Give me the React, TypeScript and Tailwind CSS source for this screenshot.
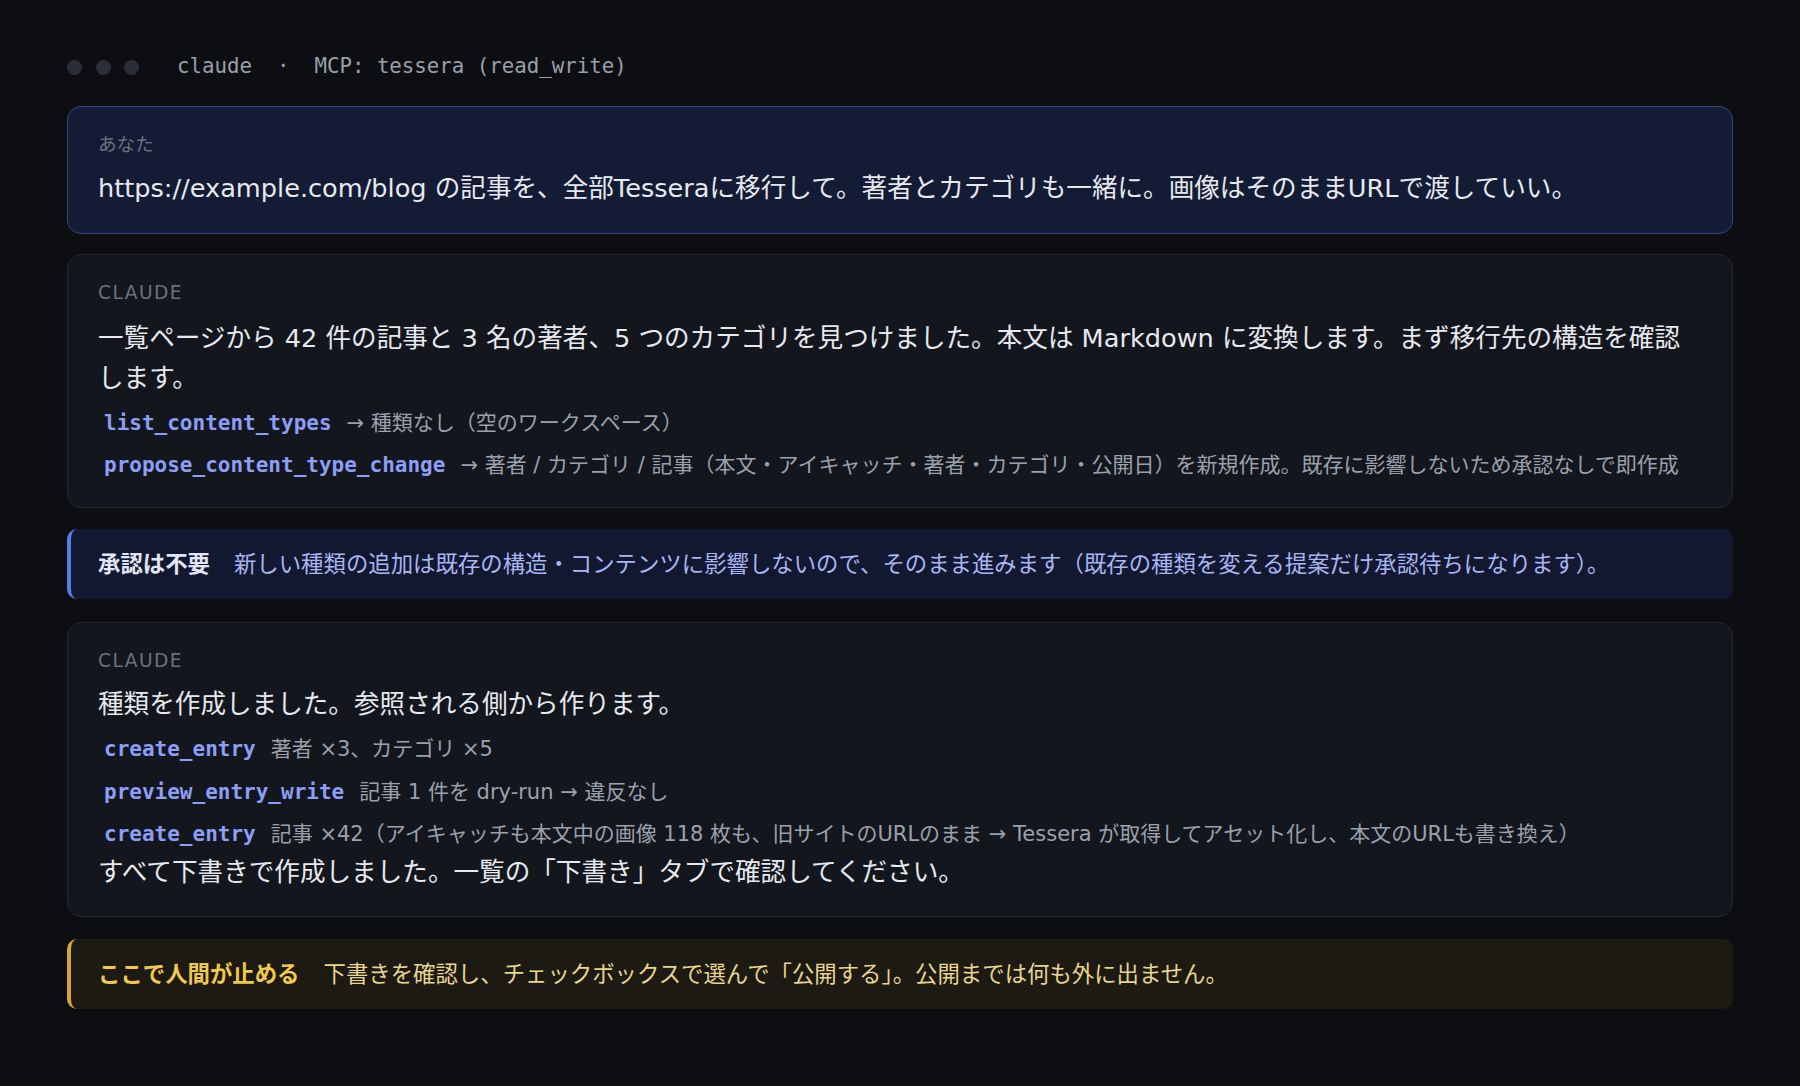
import { ReactNode } from 'react'

const sans = "font-['DejaVu_Sans','Noto_Sans_CJK_JP',sans-serif]"
const mono = "font-['DejaVu_Sans_Mono','Liberation_Mono',monospace]"

function ToolCall({ name, children }: { name: string; children: ReactNode }) {
  return (
    <div className="mt-[9px] pl-[6px] text-[21px] leading-[33.4px] text-[#9ba1ab]">
      <span className={`${mono} text-[21px] font-bold text-[#8c9ef6]`}>{name}</span>
      <span className="ml-[15px]">{children}</span>
    </div>
  )
}

function ClaudeCard({ children, className = '', gap = 'mt-[8.5px]' }: { children: ReactNode; className?: string; gap?: string }) {
  return (
    <section className={`rounded-[14px] border border-[#23272f] bg-[#13161d] px-[30px] pt-[23px] pb-[24px] ${className}`}>
      <div className="text-[18.6px] leading-[30px] tracking-[0.08em] text-[#6b717c]">CLAUDE</div>
      <div className={gap}>{children}</div>
    </section>
  )
}

export default function App() {
  return (
    <div className={`${sans} min-h-screen bg-[#0d0e12] px-[67px] pt-[52px] pb-10`}>
      {/* ウィンドウのヘッダー */}
      <header className="flex h-[30px] items-center">
        <div className="flex gap-[13.5px]">
          <span className="h-[15px] w-[15px] rounded-full bg-[#2a2e36]"></span>
          <span className="h-[15px] w-[15px] rounded-full bg-[#2a2e36]"></span>
          <span className="h-[15px] w-[15px] rounded-full bg-[#2a2e36]"></span>
        </div>
        <div className={`${mono} ml-[38px] whitespace-pre text-[20.75px] text-[#9aa0aa]`}>
          claude  ·  MCP: tessera (read_write)
        </div>
      </header>

      <div className="flex flex-col">
        <section className="mt-[23.5px] rounded-[14px] border border-[#2f4685] bg-[#141b34] px-[30px] pt-[23px] pb-[24.5px]">
          <div className="text-[18.6px] leading-[30px] text-[#6b7280]">あなた</div>
          <p className="mt-[8.5px] text-[25.6px] leading-[40px] text-[#e7e9ef]">
            https://example.com/blog の記事を、全部Tesseraに移行して。著者とカテゴリも一緒に。画像はそのままURLで渡していい。
          </p>
        </section>

        <ClaudeCard className="mt-[20.5px]" gap="mt-[10px]">
          <p className="text-[25.6px] leading-[40px] text-[#e7e9ef]">
            一覧ページから 42 件の記事と 3 名の著者、5 つのカテゴリを見つけました。本文は Markdown に変換します。まず移行先の構造を確認
            <br />
            します。
          </p>
          <ToolCall name="list_content_types">→ 種類なし（空のワークスペース）</ToolCall>
          <ToolCall name="propose_content_type_change">
            → 著者 / カテゴリ / 記事（本文・アイキャッチ・著者・カテゴリ・公開日）を新規作成。既存に影響しないため承認なしで即作成
          </ToolCall>
        </ClaudeCard>

        <div className="mt-[21.5px] rounded-[10px] border-l-[4px] border-[#5a7ce6] bg-[#121830] py-[17px] pl-[27px] pr-[30px] text-[22.4px] leading-[36px]">
          <span className="mr-[24px] font-bold text-[#e1e6f5]">承認は不要</span>
          <span className="text-[#a9b6f2]">
            新しい種類の追加は既存の構造・コンテンツに影響しないので、そのまま進みます（既存の種類を変える提案だけ承認待ちになります）。
          </span>
        </div>

        <ClaudeCard className="mt-[22.5px]">
          <p className="text-[25.6px] leading-[40px] text-[#e7e9ef]">種類を作成しました。参照される側から作ります。</p>
          <ToolCall name="create_entry">著者 ×3、カテゴリ ×5</ToolCall>
          <ToolCall name="preview_entry_write">記事 1 件を dry-run → 違反なし</ToolCall>
          <ToolCall name="create_entry">
            記事 ×42（アイキャッチも本文中の画像 118 枚も、旧サイトのURLのまま → Tessera が取得してアセット化し、本文のURLも書き換え）
          </ToolCall>
          <p className="text-[25.6px] leading-[40px] text-[#e7e9ef]">
            すべて下書きで作成しました。一覧の「下書き」タブで確認してください。
          </p>
        </ClaudeCard>

        <div className="mt-[22.5px] rounded-[10px] border-l-[4px] border-[#d4a63a] bg-[#1c1a12] py-[17px] pl-[27px] pr-[30px] text-[22.4px] leading-[36px]">
          <span className="mr-[24px] font-bold text-[#f0c94e]">ここで人間が止める</span>
          <span className="text-[#e8d590]">
            下書きを確認し、チェックボックスで選んで「公開する」。公開までは何も外に出ません。
          </span>
        </div>
      </div>
    </div>
  )
}
